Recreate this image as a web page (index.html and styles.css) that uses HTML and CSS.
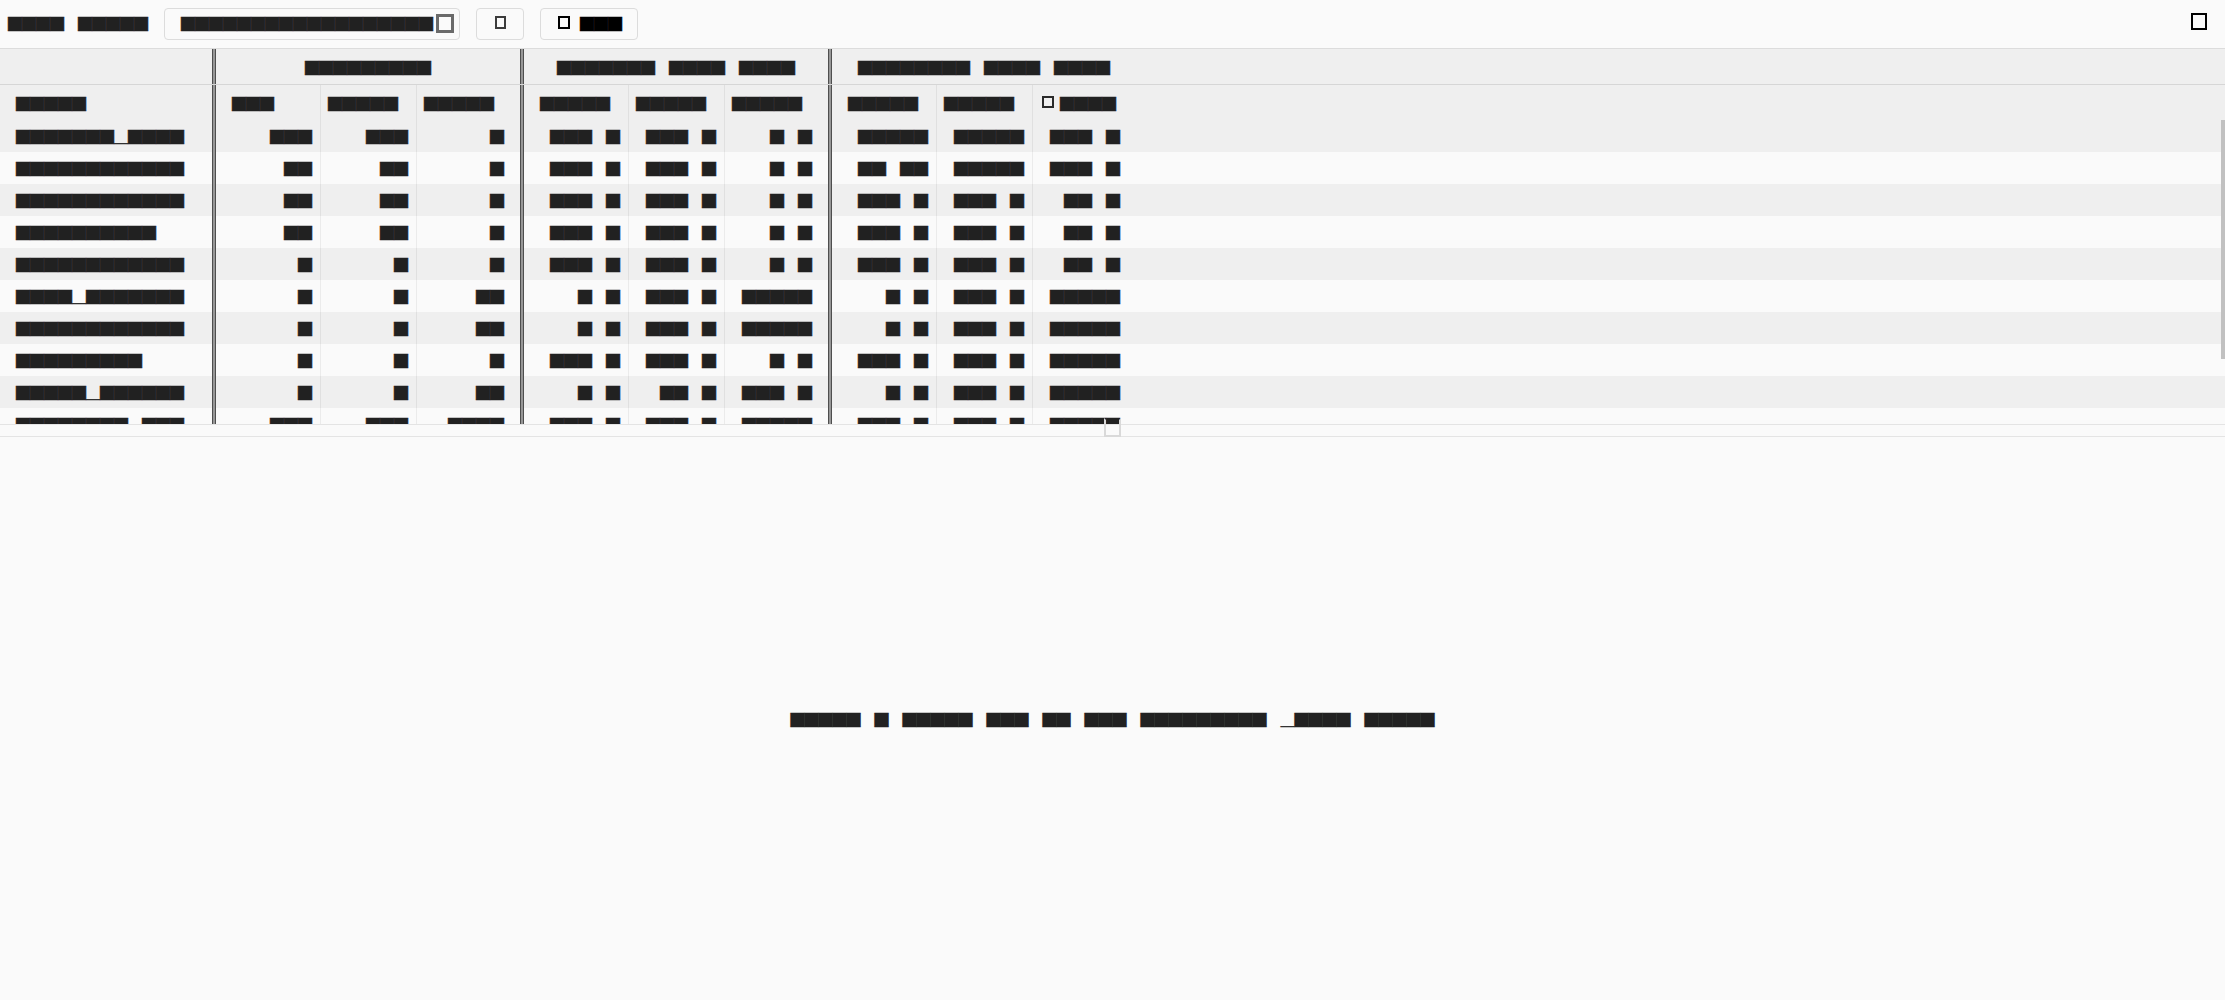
FILE: index.html
```html
<!DOCTYPE html>
<html lang="en">
<head>
<meta charset="utf-8">
<title>Table</title>
<link rel="stylesheet" href="styles.css">
</head>
<body>
<header class="toolbar">
  <div class="label">████ █████</div>
  <div class="search"><span class="search-text">██████████████████</span><span class="ico ico-clear"></span></div>
  <div class="btn btn-icon"><span class="ico ico-a"></span></div>
  <div class="btn btn-b"><span class="ico ico-b"></span><span class="btn-text">███</span></div>
  <span class="ico ico-top"></span>
</header>

<section class="table-wrap">
  <table class="grid">
    <colgroup>
      <col class="c-name"><col class="c-div"><col class="c-a"><col class="c-b"><col class="c-a"><col class="c-div"><col class="c-a"><col class="c-b"><col class="c-a"><col class="c-div"><col class="c-a"><col class="c-b"><col class="c-a"><col>
    </colgroup>
    <thead>
      <tr class="groups">
        <th></th><th class="dv"></th><th colspan="3" class="gh">█████████</th><th class="dv"></th><th colspan="3" class="gh">███████ ████ ████</th><th class="dv"></th><th colspan="3" class="gh">████████ ████ ████</th><th></th>
      </tr>
      <tr class="cols">
        <th class="name">█████</th><th class="dv"></th><th class="f">███</th><th class="m">█████</th><th class="l">█████</th><th class="dv"></th><th class="f">█████</th><th class="m">█████</th><th class="l">█████</th><th class="dv"></th><th class="f">█████</th><th class="m">█████</th><th class="l"><span class="chk"></span>████</th><th></th>
      </tr>
    </thead>
    <tbody>
      <tr><td class="name">███████＿████</td><td class="dv"></td><td class="f">███</td><td class="m">███</td><td class="l">█</td><td class="dv"></td><td class="f">███ █</td><td class="m">███ █</td><td class="l">█ █</td><td class="dv"></td><td class="f">█████</td><td class="m">█████</td><td class="l">███ █</td><td></td></tr>
      <tr><td class="name">████████████</td><td class="dv"></td><td class="f">██</td><td class="m">██</td><td class="l">█</td><td class="dv"></td><td class="f">███ █</td><td class="m">███ █</td><td class="l">█ █</td><td class="dv"></td><td class="f">██ ██</td><td class="m">█████</td><td class="l">███ █</td><td></td></tr>
      <tr><td class="name">████████████</td><td class="dv"></td><td class="f">██</td><td class="m">██</td><td class="l">█</td><td class="dv"></td><td class="f">███ █</td><td class="m">███ █</td><td class="l">█ █</td><td class="dv"></td><td class="f">███ █</td><td class="m">███ █</td><td class="l">██ █</td><td></td></tr>
      <tr><td class="name">██████████</td><td class="dv"></td><td class="f">██</td><td class="m">██</td><td class="l">█</td><td class="dv"></td><td class="f">███ █</td><td class="m">███ █</td><td class="l">█ █</td><td class="dv"></td><td class="f">███ █</td><td class="m">███ █</td><td class="l">██ █</td><td></td></tr>
      <tr><td class="name">████████████</td><td class="dv"></td><td class="f">█</td><td class="m">█</td><td class="l">█</td><td class="dv"></td><td class="f">███ █</td><td class="m">███ █</td><td class="l">█ █</td><td class="dv"></td><td class="f">███ █</td><td class="m">███ █</td><td class="l">██ █</td><td></td></tr>
      <tr><td class="name">████＿███████</td><td class="dv"></td><td class="f">█</td><td class="m">█</td><td class="l">██</td><td class="dv"></td><td class="f">█ █</td><td class="m">███ █</td><td class="l">█████</td><td class="dv"></td><td class="f">█ █</td><td class="m">███ █</td><td class="l">█████</td><td></td></tr>
      <tr><td class="name">████████████</td><td class="dv"></td><td class="f">█</td><td class="m">█</td><td class="l">██</td><td class="dv"></td><td class="f">█ █</td><td class="m">███ █</td><td class="l">█████</td><td class="dv"></td><td class="f">█ █</td><td class="m">███ █</td><td class="l">█████</td><td></td></tr>
      <tr><td class="name">█████████</td><td class="dv"></td><td class="f">█</td><td class="m">█</td><td class="l">█</td><td class="dv"></td><td class="f">███ █</td><td class="m">███ █</td><td class="l">█ █</td><td class="dv"></td><td class="f">███ █</td><td class="m">███ █</td><td class="l">█████</td><td></td></tr>
      <tr><td class="name">█████＿██████</td><td class="dv"></td><td class="f">█</td><td class="m">█</td><td class="l">██</td><td class="dv"></td><td class="f">█ █</td><td class="m">██ █</td><td class="l">███ █</td><td class="dv"></td><td class="f">█ █</td><td class="m">███ █</td><td class="l">█████</td><td></td></tr>
      <tr><td class="name">████████ ███</td><td class="dv"></td><td class="f">███</td><td class="m">███</td><td class="l">████</td><td class="dv"></td><td class="f">███ █</td><td class="m">███ █</td><td class="l">█████</td><td class="dv"></td><td class="f">███ █</td><td class="m">███ █</td><td class="l">█████</td><td></td></tr>
      <tr><td class="name">█████████</td><td class="dv"></td><td class="f">██</td><td class="m">██</td><td class="l">█</td><td class="dv"></td><td class="f">███ █</td><td class="m">███ █</td><td class="l">█ █</td><td class="dv"></td><td class="f">███ █</td><td class="m">███ █</td><td class="l">██ █</td><td></td></tr>
      <tr><td class="name">███████████</td><td class="dv"></td><td class="f">█</td><td class="m">█</td><td class="l">██</td><td class="dv"></td><td class="f">█ █</td><td class="m">███ █</td><td class="l">█████</td><td class="dv"></td><td class="f">█ █</td><td class="m">███ █</td><td class="l">█████</td><td></td></tr>
    </tbody>
  </table>
  <div class="thumb"></div>
</section>

<div class="splitter"><span class="handle"></span></div>

<main class="pane">
  <p class="empty">█████ █ █████ ███ ██ ███ █████████ ＿████ █████</p>
</main>
</body>
</html>
```

FILE: styles.css
```css
* { box-sizing: border-box; }

html, body {
  margin: 0;
  height: 100%;
}

body {
  height: 100vh;
  overflow: hidden;
  display: flex;
  flex-direction: column;
  background: #fafafa;
  color: #212121;
  font-family: "Noto Sans CJK SC", "Noto Sans", sans-serif;
  font-size: 14px;
  line-height: 20px;
  word-spacing: 0.776em;
  -webkit-text-stroke: 0.4px currentColor;
}

/* ---------- toolbar ---------- */
.toolbar {
  flex: 0 0 49px;
  display: flex;
  align-items: center;
  gap: 16px;
  padding: 0 18px 0 8px;
  border-bottom: 1px solid #dcdcdc;
}

.label {
  white-space: nowrap;
  padding-bottom: 3px;
}

.search {
  width: 296px;
  height: 32px;
  display: flex;
  align-items: center;
  gap: 3px;
  padding: 0 5px 3px 16px;
  border: 1px solid #dcdcdc;
  border-radius: 4px;
}

.search-text { white-space: nowrap; }

.btn {
  height: 32px;
  display: flex;
  align-items: center;
  padding-bottom: 3px;
  border: 1px solid #dcdcdc;
  border-radius: 4px;
}

.btn-icon {
  width: 48px;
  justify-content: center;
}

.btn-b {
  padding-left: 17px;
  padding-right: 15px;
  gap: 10px;
  color: #000;
}

.ico {
  display: inline-block;
  flex: none;
}

.ico-clear {
  width: 18px;
  height: 19px;
  border: 3px solid #6a6a6a;
  margin-top: 2px;
}

.ico-a {
  width: 11px;
  height: 13px;
  border: 2px solid #3c3c3c;
}

.ico-b {
  width: 12px;
  height: 13px;
  border: 2px solid #000;
}

.ico-top {
  width: 16px;
  height: 17px;
  border: 2px solid #000;
  margin-left: auto;
  margin-bottom: 5px;
}

/* ---------- table ---------- */
.table-wrap {
  flex: 0 0 375px;
  position: relative;
  overflow: hidden;
}

.grid {
  width: 100%;
  table-layout: fixed;
  border-collapse: separate;
  border-spacing: 0;
}

.c-name { width: 212px; }
.c-div  { width: 4px; }
.c-a    { width: 104px; }
.c-b    { width: 96px; }

.grid th,
.grid td {
  padding: 0 8px;
  font-weight: normal;
  white-space: nowrap;
  overflow: hidden;
  vertical-align: middle;
}

.grid thead tr { background: #efefef; }
.grid tr.groups { height: 36px; }
.grid tr.groups th { border-bottom: 1px solid #d6d6d6; }
.grid tr.cols { height: 35px; }
.grid tr.cols th { text-align: left; }

.grid .gh { text-align: center; padding: 0 16px; }

.grid tbody tr { height: 32px; }
.grid tbody tr:nth-child(odd) { background: #efefef; }
.grid tbody tr:nth-child(even) { background: #fafafa; }
.grid tbody td { text-align: right; }
.grid tbody td.name { text-align: left; }

.grid .name { padding-left: 16px; }
.grid .f { padding-left: 16px; }
.grid .l { padding-right: 16px; }
.grid .m,
.grid .l { box-shadow: inset 1px 0 0 rgba(0, 0, 0, 0.06); }

.grid .dv {
  padding: 0;
  background: linear-gradient(to right, #4e4e4e 0 1px, #979797 1px 3px, #4e4e4e 3px 4px);
}

.chk {
  display: inline-block;
  width: 12px;
  height: 12px;
  border: 2px solid #2a2a2a;
  margin: 0 6px 0 2px;
  vertical-align: 1px;
}

.thumb {
  position: absolute;
  right: 0;
  top: 71px;
  width: 4px;
  height: 239px;
  background: #c1c1c1;
}

/* ---------- splitter ---------- */
.splitter {
  flex: 0 0 13px;
  position: relative;
  border-top: 1px solid #e4e4e4;
  border-bottom: 1px solid #e4e4e4;
}

.handle {
  position: absolute;
  left: 50%;
  top: -7px;
  width: 17px;
  height: 19px;
  margin-left: -9px;
  border: 2px solid #d9d9d9;
  border-top-color: transparent;
}

/* ---------- lower pane ---------- */
.pane {
  flex: 1 1 auto;
  display: flex;
  align-items: center;
  justify-content: center;
}

.empty {
  margin: 0;
  white-space: nowrap;
}
```
